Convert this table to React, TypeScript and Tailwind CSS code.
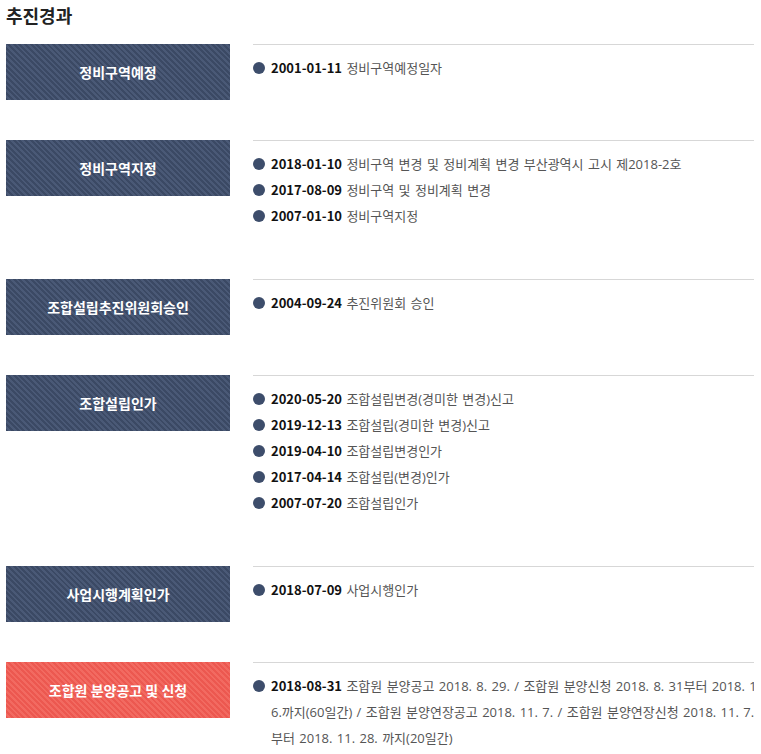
const navy =
  "bg-[#3f4d69] bg-[image:repeating-linear-gradient(45deg,#3b4964_0px,#3b4964_2px,#4a5976_2px,#4a5976_4px)]";
const red =
  "bg-[#ee5b52] bg-[image:repeating-linear-gradient(45deg,#ec5850_0px,#ec5850_2px,#f26a61_2px,#f26a61_4px)]";

interface Item {
  date: string;
  text: string;
}

interface Step {
  title: string;
  active?: boolean;
  items: Item[];
}

const steps: Step[] = [
  { title: "정비구역예정", items: [{ date: "2001-01-11", text: "정비구역예정일자" }] },
  {
    title: "정비구역지정",
    items: [
      { date: "2018-01-10", text: "정비구역 변경 및 정비계획 변경 부산광역시 고시 제2018-2호" },
      { date: "2017-08-09", text: "정비구역 및 정비계획 변경" },
      { date: "2007-01-10", text: "정비구역지정" },
    ],
  },
  { title: "조합설립추진위원회승인", items: [{ date: "2004-09-24", text: "추진위원회 승인" }] },
  {
    title: "조합설립인가",
    items: [
      { date: "2020-05-20", text: "조합설립변경(경미한 변경)신고" },
      { date: "2019-12-13", text: "조합설립(경미한 변경)신고" },
      { date: "2019-04-10", text: "조합설립변경인가" },
      { date: "2017-04-14", text: "조합설립(변경)인가" },
      { date: "2007-07-20", text: "조합설립인가" },
    ],
  },
  { title: "사업시행계획인가", items: [{ date: "2018-07-09", text: "사업시행인가" }] },
  {
    title: "조합원 분양공고 및 신청",
    active: true,
    items: [
      {
        date: "2018-08-31",
        text: "조합원 분양공고 2018. 8. 29. / 조합원 분양신청 2018. 8. 31부터 2018. 11. 6.까지(60일간) / 조합원 분양연장공고 2018. 11. 7. / 조합원 분양연장신청 2018. 11. 7. 부터 2018. 11. 28. 까지(20일간)",
      },
    ],
  },
];

export default function App() {
  return (
    <div className="w-[754px] overflow-hidden bg-white font-['Malgun_Gothic','Noto_Sans_CJK_KR',sans-serif]">
      <h2 className="h-[44px] pl-[6px] pt-[1px] text-[18px] leading-[28px] font-bold text-[#222]">추진경과</h2>

      {steps.map((step) => (
        <div key={step.title} className="flex pb-[40px]">
          <div
            className={`ml-[6px] flex h-[56px] w-[224px] shrink-0 items-center justify-center text-[14px] font-bold text-white ${
              step.active ? red : navy
            }`}
          >
            {step.title}
          </div>

          <ul className="ml-[23px] w-[516px] shrink-0 border-t border-[#d7d7d7] pt-[10px] pb-[10px]">
            {step.items.map((item) => (
              <li
                key={item.date}
                className="relative pl-[18px] font-['Open_Sans','Noto_Sans_CJK_KR',sans-serif] text-[13px] leading-[26px] text-[#555] [word-spacing:1px]"
              >
                <span className="absolute left-0 top-[7px] h-[12px] w-[12px] rounded-full bg-[#3d4d6b]" />
                <span className="font-['Noto_Sans_CJK_KR',sans-serif] font-bold text-[#111] [word-spacing:0px]">
                  {item.date}
                </span>{" "}
                {item.text}
              </li>
            ))}
          </ul>
        </div>
      ))}
    </div>
  );
}
